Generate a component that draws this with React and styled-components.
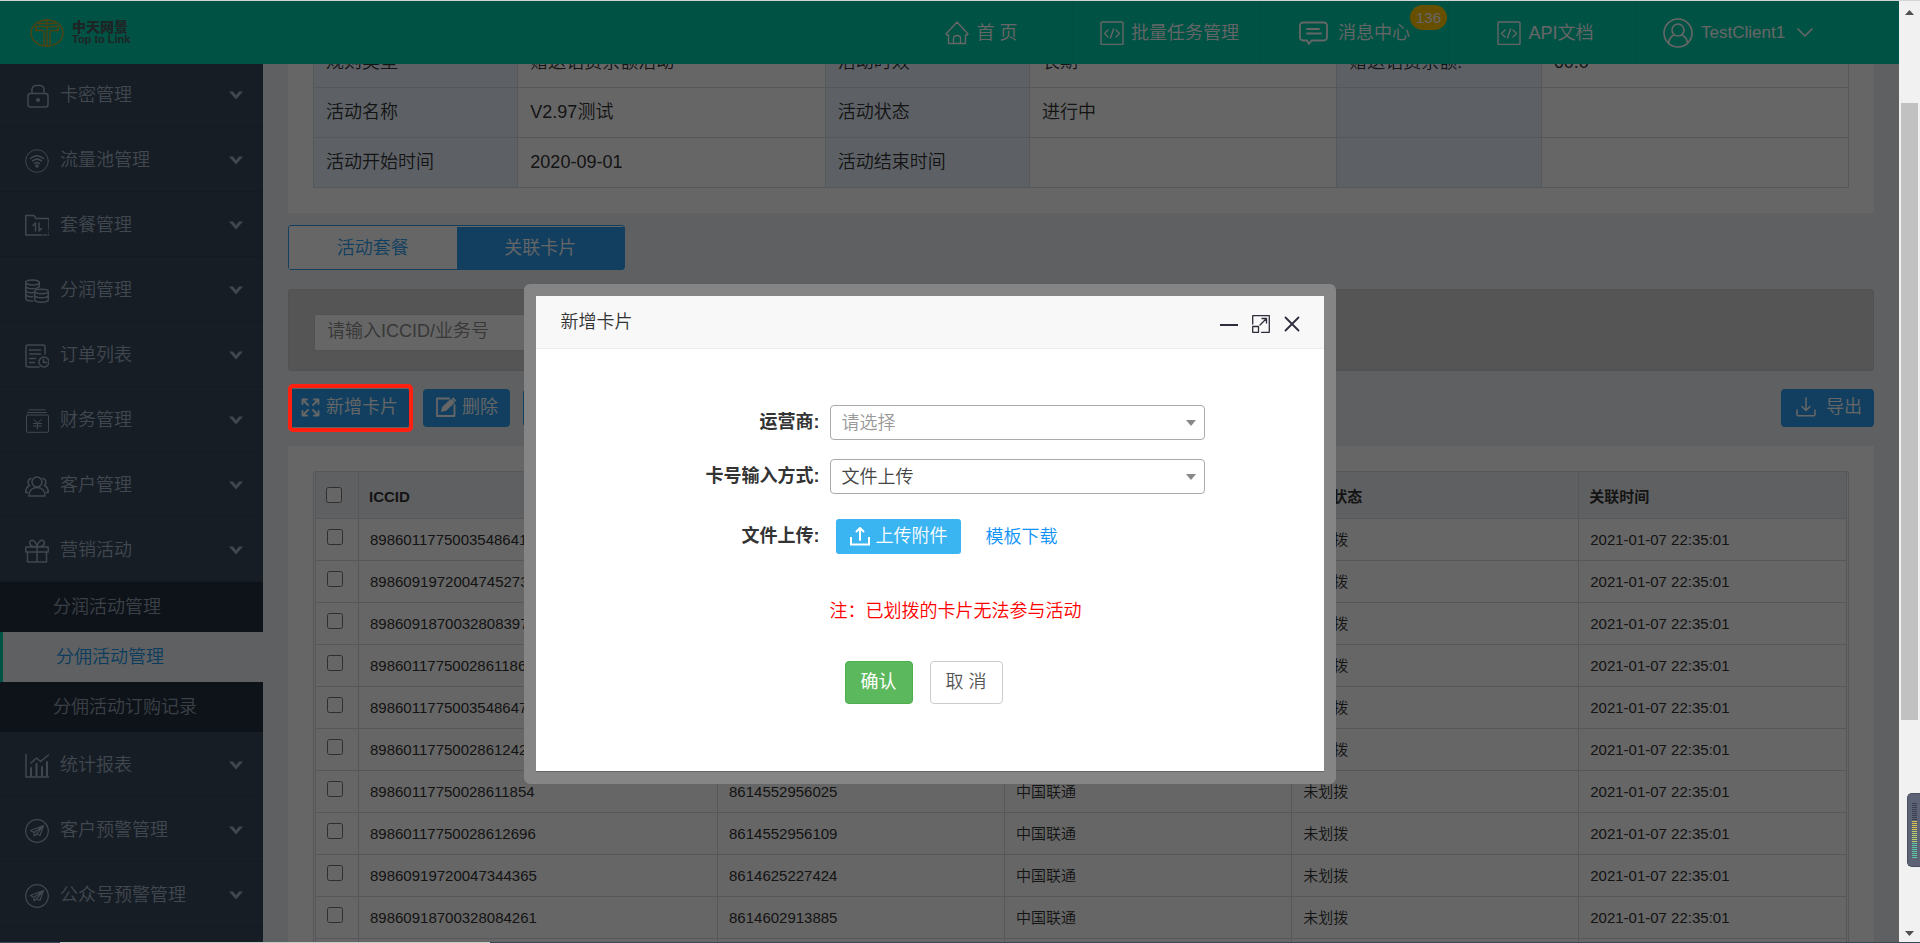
import React from 'react';
import styled, { createGlobalStyle, css } from 'styled-components';

const GlobalStyle = createGlobalStyle`
  *, *::before, *::after { box-sizing: border-box; }
  body {
    margin: 0;
    overflow: hidden;
    color: #333;
    background: #eef1f5;
    font: 350 18px/24px "Liberation Sans", "Noto Sans CJK SC", sans-serif;
  }
  button, input, select { font: inherit; color: inherit; }
  button { cursor: pointer; }
  a { text-decoration: none; }
`;

const blue = '#2d9ff0';
const line = '#d8dade';

/* ---------- frame ---------- */

const Frame = styled.div`
  display: grid;
  grid-template-rows: 1px minmax(0, 1fr) 1px;
  height: 100vh;
`;

const TopEdge = styled.div`
  background: #d0d6d8;
`;

const BottomEdge = styled.div`
  display: flex;
  padding-left: 60px;
  background: #3c4658;

  &::before {
    content: '';
    width: 430px;
    background: #c8c8c8;
  }
`;

const Screen = styled.div`
  display: flex;
  min-height: 0;
`;

const Site = styled.div`
  position: relative;
  display: flex;
  flex: 1;
  flex-direction: column;
  min-width: 0;
  overflow: hidden;
`;

const Body = styled.div`
  display: flex;
  flex: 1;
  min-height: 0;
  overflow: hidden;
`;

const Shade = styled.div`
  position: absolute;
  inset: 0;
  z-index: 10;
  background: rgba(0, 0, 0, 0.6);
`;

/* ---------- header ---------- */

const Header = styled.header`
  display: flex;
  flex: none;
  align-items: stretch;
  height: 63px;
  color: #fff;
  background: #00cdac;
`;

const Brand = styled.a`
  display: flex;
  flex: 1;
  align-items: center;
  gap: 8px;
  padding-left: 30px;
  color: #4d5c5c;
`;

const BrandName = styled.span`
  display: flex;
  flex-direction: column;
  font-size: 14px;
  font-weight: 900;
  line-height: 12px;
`;

const BrandLatin = styled.span`
  font-size: 11px;
  font-weight: 700;
`;

const NavItem = styled.a`
  display: flex;
  align-items: center;
  justify-content: center;
  gap: ${(p) => (p.$wide ? '10px' : '7px')};
  width: 188px;
  padding-left: ${(p) => (p.$wide ? '0' : '6px')};
  border-left: 1px solid ${(p) => (p.$first ? 'transparent' : '#00c3a3')};
  color: #fff;
  white-space: nowrap;
  ${(p) =>
    p.$account &&
    css`
      justify-content: flex-start;
      gap: 8px;
      width: 263px;
      padding-left: 26px;
    `}
`;

const BadgeAnchor = styled.span`
  position: relative;
`;

const Badge = styled.span`
  position: absolute;
  left: 100%;
  bottom: 15px;
  padding: 0 6px;
  border-radius: 13px;
  background: #ffc800;
  font-size: 15px;
  line-height: 25px;
`;

const AccountName = styled.span`
  margin-right: 4px;
  font-size: 17px;
`;

/* ---------- sidebar ---------- */

const Sidebar = styled.nav`
  flex: none;
  width: 263px;
  background: #374a5e;
`;

const Menu = styled.ul`
  margin: ${(p) => (p.$scrolled ? '-2px 0 0' : '0')};
  padding: 0;
  list-style: none;
`;

const MenuLink = styled.a`
  display: flex;
  align-items: center;
  gap: 11px;
  height: 65px;
  padding: 3px 20px 0 25px;
  border-bottom: 1px solid #304153;
  color: #a3b1c2;
`;

const MenuText = styled.span`
  flex: 1;
  padding-bottom: 2px;
`;

const SubLink = styled.a`
  display: flex;
  align-items: center;
  height: 50px;
  padding-left: 53px;
  color: #93a1b2;
  background: #243040;
  ${(p) =>
    p.$active &&
    css`
      border-left: 3px solid #00cdac;
      color: #1a96e8;
      background: #eef1f5;
    `}
`;

/* ---------- main ---------- */

const Main = styled.main`
  display: flex;
  flex: 1;
  flex-direction: column;
  min-width: 0;
  margin-top: -27px;
  padding: 0 25px;
  background: #eef1f5;
`;

const Panel = styled.section`
  flex: none;
  padding: ${(p) => (p.$flush ? '0 25px 25px' : '25px')};
  background: #fff;
`;

const InfoTable = styled.table`
  width: 100%;
  border-collapse: collapse;
  table-layout: fixed;

  th, td {
    width: 20%;
    height: 50px;
    padding: 0 12px 2px;
    border: 1px solid ${line};
    font-weight: inherit;
    text-align: left;
  }
  th {
    width: 13.3%;
    background: #e9f3ff;
  }
`;

const Tabs = styled.div`
  display: flex;
  flex: none;
  width: 337px;
  height: 45px;
  margin: 12px 0 19px;
  padding-top: 1px;
  border: 1px solid ${blue};
  border-radius: 3px;
  background: #fff;
`;

const Tab = styled.button`
  flex: 1;
  padding: 0;
  border: 0;
  color: ${(p) => (p.$active ? '#fff' : blue)};
  background: ${(p) => (p.$active ? blue : '#fff')};
`;

const SearchBar = styled.form`
  flex: none;
  height: 82px;
  padding: 24px 25px;
  border: 1px solid #ccccd0;
  border-radius: 3px;
  background: #d5d5d8;
`;

const SearchInput = styled.input`
  width: 260px;
  height: 37px;
  padding: 0 12px 2px;
  border: 1px solid #ccc;
  border-radius: 2px;
  background: #fff;

  &::placeholder { color: #8c8c8c; opacity: 1; }
`;

const Actions = styled.div`
  display: flex;
  flex: none;
  gap: 13px;
  margin: 18px 0 19px;
`;

const Spacer = styled.span`
  flex: 1;
`;

const ActionButton = styled.button`
  position: relative;
  display: flex;
  align-items: center;
  gap: ${(p) => (p.$roomy ? '10px' : '6px')};
  height: 38px;
  padding: ${(p) => (p.$roomy ? '0 12px 2px 15px' : '0 12px 2px 13px')};
  border: 0;
  border-radius: 4px;
  color: #fff;
  background: ${blue};
  ${(p) =>
    p.$marked &&
    css`
      &::after {
        content: '';
        position: absolute;
        z-index: 15;
        inset: -5px -3px -5px 0;
        border: 4px solid #ff2010;
        border-radius: 5px;
      }
    `}
`;

const TableFrame = styled.div`
  padding: 0 1px;
  border: 1px solid ${line};
  border-radius: 3px 3px 0 0;
`;

const CardTable = styled.table`
  width: 100%;
  margin-top: -1px;
  border-collapse: collapse;
  table-layout: fixed;
  font-size: 15px;
  line-height: 20px;

  th, td {
    height: 42px;
    padding: 0 11px;
    border: 1px solid ${line};
    text-align: left;
    white-space: nowrap;
  }
  th {
    height: 47px;
    padding: 4px 10px 0;
    background: #eef1f5;
    font-weight: 700;
  }
`;

const Check = styled.input`
  display: block;
  width: 16px;
  height: 16px;
  margin: 0 0 5px;
`;

/* ---------- dialog ---------- */

const Dialog = styled.section`
  position: absolute;
  z-index: 20;
  top: 283px;
  left: calc(50% - 426px);
  width: 812px;
  border: 12px solid #858585;
  border-radius: 6px;
  background: #fff;
`;

const DialogHead = styled.header`
  display: flex;
  align-items: center;
  gap: 14px;
  height: 53px;
  padding: 0 24px 0 25px;
  border-bottom: 1px solid #eee;
  background: #f8f8f8;
`;

const DialogTitle = styled.h2`
  flex: 1;
  margin: 0;
  font: inherit;
`;

const IconButton = styled.button`
  display: flex;
  padding: 0;
  margin-top: 3px;
  border: 0;
  color: #2e2d3c;
  background: none;
`;

const Form = styled.form`
  display: grid;
  grid-template-columns: 284px 375px;
  column-gap: 10px;
  row-gap: 19px;
  align-items: end;
  padding: 56px 0 67px;
  border-bottom: 1px solid #666;
`;

const Label = styled.label`
  font-weight: 700;
  line-height: 35px;
  text-align: right;
`;

const SelectBox = styled.span`
  display: grid;
  align-items: center;

  > * { grid-area: 1 / 1; }
  > svg {
    justify-self: end;
    margin-right: 9px;
    pointer-events: none;
  }
`;

const Select = styled.select`
  width: 100%;
  height: 35px;
  padding: 0 11px;
  border: 1px solid #aaa;
  border-radius: 4px;
  appearance: none;
  color: ${(p) => (p.$empty ? '#999' : '#444')};
  background: #fff;
`;

const UploadRow = styled.div`
  display: flex;
  align-items: center;
  gap: 25px;
  margin: 6px 0 0 6px;
`;

const UploadButton = styled.button`
  display: flex;
  align-items: center;
  gap: 6px;
  height: 35px;
  padding: 0 13px 1px 14px;
  border: 0;
  border-radius: 3px;
  color: #fff;
  background: #3bb4f2;
`;

const Download = styled.a`
  color: #0d92fa;
`;

const Note = styled.p`
  grid-column: 2;
  margin: 26px 0 0;
  color: #f00;
`;

const Buttons = styled.div`
  display: flex;
  grid-column: 2;
  gap: 17px;
  margin: 19px 0 0 15px;
`;

const FormButton = styled.button`
  height: 43px;
  padding: 0 15px 2px;
  border: 1px solid ${(p) => (p.$primary ? '#4cae4c' : '#ccc')};
  border-radius: 4px;
  color: ${(p) => (p.$primary ? '#fff' : '#555')};
  background: ${(p) => (p.$primary ? '#5cb85c' : '#fff')};
  font-weight: ${(p) => (p.$primary ? 400 : 'inherit')};
`;

/* ---------- scroll bar and meter ---------- */

const ScrollBar = styled.div`
  position: relative;
  display: flex;
  flex: none;
  flex-direction: column;
  align-items: center;
  width: 21px;
  padding: 9px 0 6px;
  color: #505050;
  background: #f1f1f1;
`;

const ScrollTrack = styled.div`
  flex: 1;
  align-self: stretch;
  padding: 88px 2px 211px;
`;

const ScrollThumb = styled.div`
  height: 100%;
  background: #c1c1c1;
`;

const Meter = styled.div`
  position: absolute;
  right: 0;
  bottom: 75px;
  display: flex;
  flex-direction: column;
  align-items: center;
  gap: 1px;
  width: 13px;
  height: 74px;
  padding-top: 9px;
  border: 1px solid #4a5060;
  border-right: 0;
  border-radius: 5px 0 0 5px;
  background: #5d6375;
`;

const MeterBar = styled.i`
  width: 5px;
  height: 1px;
  background: ${(p) => p.$tone};
`;

/* ---------- icons ---------- */

const Svg = ({ w = 24, h = w, vw = w, vh = h, sw = 1.5, children }) => (
  <svg width={w} height={h} viewBox={`0 0 ${vw} ${vh}`} fill="none" stroke="currentColor"
    strokeWidth={sw} strokeLinejoin="round" strokeLinecap="round" aria-hidden="true">
    {children}
  </svg>
);

const LogoMark = () => (
  <svg width="34" height="30" viewBox="0 0 34 30" fill="none" stroke="#c8a828" strokeWidth="1.4" aria-hidden="true">
    <ellipse cx="17" cy="15" rx="16" ry="13" />
    <path d="M8 5.500h18M17 2v5M5.500 8.500h9.500c1.200 0 2 .7 2 2V27M28.500 8.500H19c-1.200 0-2 .7-2 2M5 12.500h7.500c1 0 1.500.6 1.500 1.500v13M29 12.500h-7.500c-1 0-1.500.6-1.500 1.500v13M5.500 8.500c0 2 .5 4 2.500 4M28.500 8.500c0 2-.5 4-2.500 4" />
    <circle cx="17" cy="2" r="1.200" fill="#c8a828" stroke="none" />
    <circle cx="17" cy="28" r="1.200" fill="#c8a828" stroke="none" />
  </svg>
);

const HomeIcon = () => (
  <Svg sw={1.4}>
    <path d="M1 13 12 1l11 12-1 1h-1.500v8.500H3.500V14H2z" />
    <path d="M8.500 22.500v-5c0-4 7-4 7 0v5" />
  </Svg>
);

const CodeIcon = () => (
  <Svg sw={1.4}>
    <rect x="1" y="1" width="22" height="22.500" rx="1" />
    <path d="m8 9-3.500 3.500L8 16M16 9l3.500 3.500L16 16M13.500 8l-3 9" />
  </Svg>
);

const MessageIcon = () => (
  <Svg w={29} h={24} sw={1.8}>
    <path d="M4 1.500h21a3 3 0 0 1 3 3v12a3 3 0 0 1-3 3H12.500L10 23l-2-3.500H4a3 3 0 0 1-3-3v-12a3 3 0 0 1 3-3z" />
    <path d="M8 8h12M8 12.500h14" />
  </Svg>
);

const UserIcon = () => (
  <Svg w={30} sw={1.6}>
    <circle cx="15" cy="15" r="14" />
    <circle cx="15" cy="12" r="6" />
    <path d="M5.500 25c.5-4.500 3-7 6-8M24.500 25c-.5-4.500-3-7-6-8" />
  </Svg>
);

const NavChevron = () => (
  <Svg w={16} h={10} sw={1.6}>
    <path d="m1 1 7 7 7-7" />
  </Svg>
);

const MenuChevron = () => (
  <Svg w={14} h={9}>
    <path d="M0 .5h4l3 3.800L10 .5h4L7 8.500z" fill="currentColor" stroke="none" />
  </Svg>
);

const menuIcons = {
  lock: (
    <>
      <rect x="3" y="9.500" width="20" height="13.500" rx="2.500" />
      <path d="M7 9.500V6a4 4 0 0 1 4-4.500h4A4 4 0 0 1 19 6v3.500" />
      <circle cx="13" cy="16" r="1.300" fill="currentColor" />
    </>
  ),
  wifi: (
    <>
      <circle cx="12" cy="12" r="11.300" strokeWidth="1" />
      <path d="M5.500 9.500c4-3.500 9-3.500 13 0M7.500 12c3-2.500 6-2.500 9 0M9.500 14.500c2-1.500 3-1.500 5 0" />
      <circle cx="12" cy="17" r="1" fill="currentColor" />
    </>
  ),
  folder: (
    <>
      <path d="M24 15V4.500H11L9 1.500H.8V21H17M19 21h2M23 21h1M24 18v.5" />
      <path d="M10.500 17V9L8 11.500M14 9v8l2.500-2.500" />
    </>
  ),
  coins: (
    <>
      <ellipse cx="7.500" cy="3.500" rx="6.800" ry="2.500" />
      <path d="M.8 3.500v16c0 1.500 3 2.500 7 2.500M.8 7.500C2 10.500 13 10.500 14.300 7.500V3.500M.8 11.500c1 2 5 2.500 8 2M.8 15.500c1 2 4 2.500 7 2" />
      <ellipse cx="16.500" cy="12.500" rx="6.800" ry="2.200" />
      <path d="M9.700 12.500v8.500c1 3 12.600 3 13.600 0v-8.500M9.700 16.500c1 3 12.600 3 13.600 0" />
    </>
  ),
  order: (
    <>
      <path d="M20 10V3a2 2 0 0 0-2-2H3a2 2 0 0 0-2 2v18a2 2 0 0 0 2 2h11M4.500 6h11M4.500 10h11M4.500 14.500h6M4.500 18.500h5" />
      <circle cx="19" cy="18" r="5" />
      <path d="M18.500 15.500v3H22" />
    </>
  ),
  finance: (
    <>
      <path d="M4 .8h16M2.500 3.500h19" strokeWidth="1" />
      <rect x="1.500" y="6" width="22" height="17.300" rx="1" strokeWidth="1" />
      <path d="m9 10.500 3.500 4 3.500-4M8.500 14.500h8M8.500 17h8M12.500 14.500v5.500" strokeWidth="1" />
    </>
  ),
  people: (
    <>
      <circle cx="12" cy="8" r="5" />
      <path d="M4 22c0-5 3-8.500 8-8.500s8 3.500 8 8.500zM6 4.500C3 5 2 9 4.500 11.500 2 12.500.8 15 .8 18.500h2M18 4.500c3 .5 4 4.500 1.500 7 2.500 1 3.700 3.500 3.700 7h-2" />
    </>
  ),
  gift: (
    <>
      <path d="M.8 8h22.400v5H.8zM2.500 13v10H21.500V13M12 8v15M12 8C7 8 3.500 6 5 2.500 7-.5 11 2 12 8M12 8c5 0 8.500-2 7-5.500C17-.5 13 2 12 8" />
    </>
  ),
  chart: (
    <>
      <path d="M1 0v23h23" />
      <path d="M6 22v-8M11.500 22V10M17 22v-9M22 22V8" strokeWidth="2" />
      <path d="m6 9 5.500-5 4 3.500 8-6.500" />
    </>
  ),
  plane: (
    <>
      <circle cx="12" cy="12" r="11.300" strokeWidth="1.2" />
      <path d="m18.500 6.500-13 5 3.500 2 9.500-7-7 8.500 3.500 1.500zM9 13.500V17l2.500-2" strokeWidth="1.2" />
    </>
  ),
};

const ExpandIcon = () => (
  <Svg w={19} sw={1.8}>
    <path d="M1.500 6V1.500H6M13 1.500h4.500V6M1.500 13v4.500H6M13 17.500h4.500V13M2 2l5 5M17 2l-5 5M2 17l5-5M17 17l-5-5" />
  </Svg>
);

const EditIcon = () => (
  <Svg w={20} sw={1.8}>
    <path d="M13 1.500H1v17.500h17.500V8" />
    <path d="m6 14 1-3.500 8-7.500 2.500 2.500L9.500 13zM17 1.500l2 2" fill="currentColor" />
  </Svg>
);

const DownloadIcon = () => (
  <Svg w={20}>
    <path d="M1 13v4.500c0 .8.500 1.200 1.200 1.200h15.600c.7 0 1.200-.4 1.200-1.200V13M10 1v12M6 9.500l4 4 4-4" />
  </Svg>
);

const UploadIcon = () => (
  <Svg w={20} sw={2}>
    <path d="M1 11v7.500h18V11" strokeLinecap="butt" strokeLinejoin="miter" />
    <path d="M10 14V3M6.500 5.500 10 2l3.500 3.500" />
  </Svg>
);

const MinIcon = () => (
  <Svg w={18} sw={2}>
    <path d="M0 10h18" />
  </Svg>
);

const MaxIcon = () => (
  <Svg w={18} sw={1.3}>
    <path d="M.7 9V.7h16.600v16.600H9.500M.7 11.500h5.800v5.800H.7zM8 10l6.500-6.500M10 3.500h4.500V8" />
  </Svg>
);

const CloseIcon = () => (
  <Svg w={16} sw={1.8}>
    <path d="m1.500 1.500 13 13M14.500 1.500l-13 13" />
  </Svg>
);

const SelectArrow = () => (
  <svg width="10" height="6" viewBox="0 0 10 6" aria-hidden="true">
    <path d="M0 0h10L5 6z" fill="#888" />
  </svg>
);

/* ---------- data ---------- */

const menu = [
  ['lock', '卡密管理'],
  ['wifi', '流量池管理'],
  ['folder', '套餐管理'],
  ['coins', '分润管理'],
  ['order', '订单列表'],
  ['finance', '财务管理'],
  ['people', '客户管理'],
  ['gift', '营销活动', ['分润活动管理', '分佣活动管理', '分佣活动订购记录']],
  ['chart', '统计报表'],
  ['plane', '客户预警管理'],
  ['plane', '公众号预警管理'],
];

const info = [
  ['规则类型', '赠送话费余额活动', '活动时效', '长期', '赠送话费余额:', '60.0'],
  ['活动名称', 'V2.97测试', '活动状态', '进行中', '', ''],
  ['活动开始时间', '2020-09-01', '活动结束时间', '', '', ''],
];

const cards = [
  ['89860117750035486410', '8614552956010'],
  ['89860919720047452730', '8614625227410'],
  ['89860918700328083970', '8614602913870'],
  ['89860117750028611860', '8614552956020'],
  ['89860117750035486470', '8614552956030'],
  ['89860117750028612420', '8614552956040'],
  ['89860117750028611854', '8614552956025'],
  ['89860117750028612696', '8614552956109'],
  ['89860919720047344365', '8614625227424'],
  ['89860918700328084261', '8614602913885'],
  ['89860918700328084279', '8614602913886'],
];

const meterTones = [
  ...Array(9).fill('#3a3f50'),
  ...Array(5).fill('#d9c24e'),
  ...Array(6).fill('#b4d070'),
  ...Array(8).fill('#5cc8a4'),
];

/* ---------- page ---------- */

const MenuEntry = ({ icon, text, sub }) => (
  <li>
    <MenuLink href="#">
      <Svg>{menuIcons[icon]}</Svg>
      <MenuText>{text}</MenuText>
      <MenuChevron />
    </MenuLink>
    {sub && (
      <Menu>
        {sub.map((name, i) => (
          <li key={name}>
            <SubLink href="#" $active={i === 1}>{name}</SubLink>
          </li>
        ))}
      </Menu>
    )}
  </li>
);

export default function App() {
  return (
    <Frame>
      <GlobalStyle />
      <TopEdge />
      <Screen>
        <Site>
          <Header>
            <Brand href="#">
              <LogoMark />
              <BrandName>
                中天网景
                <BrandLatin>Top to Link</BrandLatin>
              </BrandName>
            </Brand>
            <NavItem href="#" $first><HomeIcon />首 页</NavItem>
            <NavItem href="#"><CodeIcon />批量任务管理</NavItem>
            <NavItem href="#" $wide>
              <MessageIcon />
              <BadgeAnchor>消息中心<Badge>136</Badge></BadgeAnchor>
            </NavItem>
            <NavItem href="#"><CodeIcon />API文档</NavItem>
            <NavItem href="#" $account>
              <UserIcon />
              <AccountName>TestClient1</AccountName>
              <NavChevron />
            </NavItem>
          </Header>

          <Body>
            <Sidebar>
              <Menu $scrolled>
                {menu.map(([icon, text, sub]) => (
                  <MenuEntry key={text} icon={icon} text={text} sub={sub} />
                ))}
              </Menu>
            </Sidebar>

            <Main>
              <Panel $flush>
                <InfoTable>
                  <tbody>
                    {info.map((row) => (
                      <tr key={row[0]}>
                        {row.map((cell, i) => (i % 2 ? <td key={i}>{cell}</td> : <th key={i} scope="row">{cell}</th>))}
                      </tr>
                    ))}
                  </tbody>
                </InfoTable>
              </Panel>

              <Tabs>
                <Tab type="button">活动套餐</Tab>
                <Tab type="button" $active>关联卡片</Tab>
              </Tabs>

              <SearchBar>
                <SearchInput aria-label="ICCID/业务号" placeholder="请输入ICCID/业务号" />
              </SearchBar>

              <Actions>
                <ActionButton type="button" $marked><ExpandIcon />新增卡片</ActionButton>
                <ActionButton type="button"><EditIcon />删除</ActionButton>
                <ActionButton type="button"><EditIcon />清空</ActionButton>
                <Spacer />
                <ActionButton type="button" $roomy><DownloadIcon />导出</ActionButton>
              </Actions>

              <Panel>
                <TableFrame>
                  <CardTable>
                    <colgroup>
                      <col style={{ width: '43px' }} />
                      <col style={{ width: '23.45%' }} />
                      <col style={{ width: '18.75%' }} />
                      <col style={{ width: '18.75%' }} />
                      <col style={{ width: '18.75%' }} />
                      <col />
                    </colgroup>
                    <thead>
                      <tr>
                        <th><Check type="checkbox" aria-label="全选" /></th>
                        <th>ICCID</th>
                        <th>业务号</th>
                        <th>运营商</th>
                        <th>划拨状态</th>
                        <th>关联时间</th>
                      </tr>
                    </thead>
                    <tbody>
                      {cards.map(([iccid, number]) => (
                        <tr key={iccid}>
                          <td><Check type="checkbox" aria-label={iccid} /></td>
                          <td>{iccid}</td>
                          <td>{number}</td>
                          <td>中国联通</td>
                          <td>未划拨</td>
                          <td>2021-01-07 22:35:01</td>
                        </tr>
                      ))}
                    </tbody>
                  </CardTable>
                </TableFrame>
              </Panel>
            </Main>
          </Body>

          <Shade />

          <Dialog role="dialog" aria-labelledby="dialog-title">
            <DialogHead>
              <DialogTitle id="dialog-title">新增卡片</DialogTitle>
              <IconButton type="button" aria-label="最小化"><MinIcon /></IconButton>
              <IconButton type="button" aria-label="最大化"><MaxIcon /></IconButton>
              <IconButton type="button" aria-label="关闭"><CloseIcon /></IconButton>
            </DialogHead>
            <Form>
              <Label htmlFor="carrier">运营商:</Label>
              <SelectBox>
                <Select id="carrier" $empty><option>请选择</option></Select>
                <SelectArrow />
              </SelectBox>
              <Label htmlFor="mode">卡号输入方式:</Label>
              <SelectBox>
                <Select id="mode"><option>文件上传</option></Select>
                <SelectArrow />
              </SelectBox>
              <Label htmlFor="upload">文件上传:</Label>
              <UploadRow>
                <UploadButton type="button" id="upload"><UploadIcon />上传附件</UploadButton>
                <Download href="#">模板下载</Download>
              </UploadRow>
              <Note>注：已划拨的卡片无法参与活动</Note>
              <Buttons>
                <FormButton type="submit" $primary>确认</FormButton>
                <FormButton type="button">取 消</FormButton>
              </Buttons>
            </Form>
          </Dialog>
        </Site>

        <ScrollBar>
          <svg width="9" height="5" viewBox="0 0 9 5" aria-hidden="true"><path d="M4.500 0 9 5H0z" fill="currentColor" /></svg>
          <ScrollTrack><ScrollThumb /></ScrollTrack>
          <svg width="9" height="5" viewBox="0 0 9 5" aria-hidden="true"><path d="M0 0h9L4.500 5z" fill="currentColor" /></svg>
          <Meter>
            {meterTones.map((tone, i) => <MeterBar key={i} $tone={tone} />)}
          </Meter>
        </ScrollBar>
      </Screen>
      <BottomEdge />
    </Frame>
  );
}
